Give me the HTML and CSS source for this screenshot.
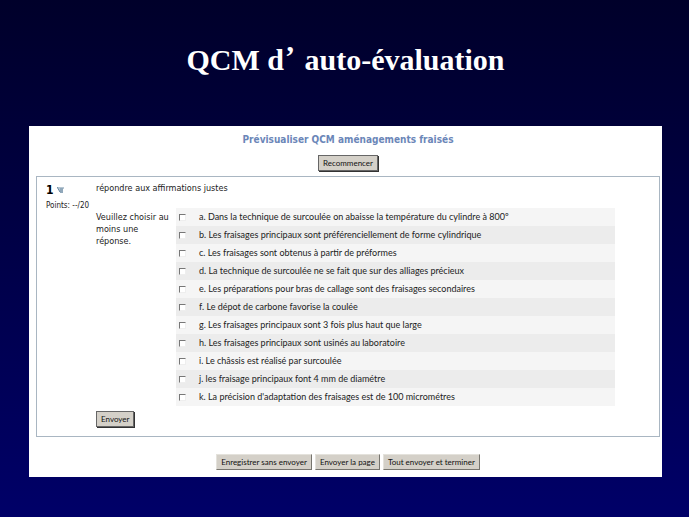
FILE: index.html
```html
<!DOCTYPE html>
<html lang="fr">

<head>
    <meta charset="UTF-8">
    <meta name="viewport" content="width=device-width, initial-scale=1.0">
    <title>QCM d’ auto-évaluation</title>
    <link rel="stylesheet" href="styles.css">
</head>

<body>
    <h1 class="slide-title">QCM d<span class="quote">’</span> auto-évaluation</h1>

    <form class="quiz" method="post">
        <h2>Prévisualiser QCM aménagements fraisés</h2>
        <button type="button" class="btn dark restart">Recommencer</button>

        <div class="question">
            <div class="info">
                <div class="number">
                    <span>1</span>
                    <svg class="edit-icon" viewBox="0 0 7 8" width="7" height="8">
                        <path d="M0 1h3v1h3v1H6v4H3V6H2V4H1V2H0z" fill="#b4c5d2" />
                        <path d="M0 1l3 5M3 2h4M3 4h3M3 6h3" stroke="#6f8ca4" stroke-width="1" fill="none" />
                    </svg>
                </div>
                <div class="points">Points: --/20</div>
            </div>

            <div class="content">
                <p class="statement">répondre aux affirmations justes</p>
                <div class="answer-block">
                    <p class="prompt">Veuillez choisir au moins une réponse.</p>
                    <div class="answers">
                        <label class="answer"><input type="checkbox" name="a"><span>a. Dans la technique de surcoulée on abaisse la température du cylindre à 800º</span></label>
                        <label class="answer"><input type="checkbox" name="b"><span>b. Les fraisages principaux sont préférenciellement de forme cylindrique</span></label>
                        <label class="answer"><input type="checkbox" name="c"><span>c. Les fraisages sont obtenus à partir de préformes</span></label>
                        <label class="answer"><input type="checkbox" name="d"><span>d. La technique de surcoulée ne se fait que sur des alliages précieux</span></label>
                        <label class="answer"><input type="checkbox" name="e"><span>e. Les préparations pour bras de callage sont des fraisages secondaires</span></label>
                        <label class="answer"><input type="checkbox" name="f"><span>f. Le dépot de carbone favorise la coulée</span></label>
                        <label class="answer"><input type="checkbox" name="g"><span>g. Les fraisages principaux sont 3 fois plus haut que large</span></label>
                        <label class="answer"><input type="checkbox" name="h"><span>h. Les fraisages principaux sont usinés au laboratoire</span></label>
                        <label class="answer"><input type="checkbox" name="i"><span>i. Le châssis est réalisé par surcoulée</span></label>
                        <label class="answer"><input type="checkbox" name="j"><span>j. les fraisage principaux font 4 mm de diamétre</span></label>
                        <label class="answer"><input type="checkbox" name="k"><span>k. La précision d'adaptation des fraisages est de 100 micrométres</span></label>
                    </div>
                </div>
                <button type="button" class="btn dark">Envoyer</button>
            </div>
        </div>

        <div class="actions">
            <button type="button" class="btn">Enregistrer sans envoyer</button>
            <button type="button" class="btn">Envoyer la page</button>
            <button type="button" class="btn">Tout envoyer et terminer</button>
        </div>
    </form>
</body>

</html>
```
FILE: styles.css
```css
* {
    box-sizing: border-box;
}

html {
    min-height: 100%;
    background: linear-gradient(#00002a, #000042 40%, #000068);
}

body {
    margin: 0;
    padding: 40px 27px 40px 29px;
    font-family: "DejaVu Sans Condensed", "DejaVu Sans", sans-serif;
    font-size: 9px;
    line-height: 12px;
    color: #222;
}

h1, h2, p {
    margin: 0;
}

.slide-title {
    margin-bottom: 46px;
    font-family: "Liberation Serif", serif;
    font-size: 30px;
    line-height: 40px;
    text-align: center;
    color: #fff;
}

.quote {
    padding: 0 2px 0 1px;
    vertical-align: 4px;
    line-height: 1;
}

.quiz {
    padding: 7px 2px 7px 7px;
    background-color: #fff;
}

.quiz h2 {
    margin-bottom: 8px;
    font-size: 10px;
    line-height: 14px;
    text-align: center;
    color: #6b86b8;
}

.btn {
    display: block;
    height: 16px;
    padding: 0 4px;
    border: 1px solid;
    border-color: #e4e2dc #77756f #77756f #e4e2dc;
    border-radius: 0;
    background-color: #d4d0c8;
    font-family: Lato, "Liberation Sans", sans-serif;
    font-size: 8px;
    line-height: 12px;
    color: #111;
}

.btn.dark {
    border-color: #666;
    box-shadow: 1px 1px 0 #333;
}

.restart {
    margin: 0 auto 5px;
}

.question {
    display: flex;
    padding: 5px 44px 9px 9px;
    border: 1px solid #a9b6c2;
}

.info {
    flex: 0 0 50px;
}

.number {
    display: flex;
    align-items: center;
    gap: 3px;
    margin-bottom: 2px;
    font-size: 12px;
    font-weight: bold;
    line-height: 16px;
    color: #000;
}

.points {
    font-size: 8px;
    white-space: nowrap;
}

.content {
    flex: 1;
}

.statement {
    margin-bottom: 14px;
}

.answer-block {
    display: flex;
    margin-bottom: 5px;
}

.prompt {
    flex: 0 0 80px;
    padding: 3px 6px 0 0;
}

.answers {
    flex: 1;
    font-family: Lato, sans-serif;
}

.answer {
    display: flex;
    align-items: center;
    height: 18px;
    padding-left: 3px;
    background-color: #f5f5f5;
}

.answer:nth-child(even) {
    background-color: #ececec;
}

.answer input {
    appearance: none;
    width: 7px;
    height: 7px;
    margin: 0 13px 0 0;
    border: 1px solid;
    border-color: #777 #eee #eee #777;
    background-color: #fff;
}

.actions {
    display: flex;
    justify-content: center;
    gap: 3px;
    margin-top: 17px;
}
```
